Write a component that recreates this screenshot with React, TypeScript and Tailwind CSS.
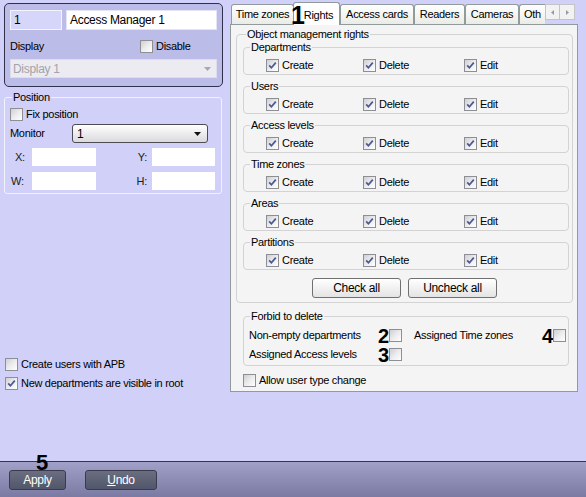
import React from "react";

function Cb({ checked }: { checked?: boolean }) {
  return (
    <span className="w-[13px] h-[13px] shrink-0 border border-[#8e8f94] bg-gradient-to-br from-[#cfcfd4] via-[#ececee] to-white flex items-center justify-center">
      {checked && (
        <svg width="9" height="9" viewBox="0 0 9 9">
          <path d="M1.2 4.4 L3.4 6.8 L7.8 1.6" stroke="#4a5894" strokeWidth="1.7" fill="none" />
        </svg>
      )}
    </span>
  );
}

function Row3() {
  return (
    <div className="flex items-center h-[13px] mt-[5px]">
      <div className="w-[22px]" />
      <div className="w-[97px] flex items-center gap-[3px]">
        <Cb checked />
        <span>Create</span>
      </div>
      <div className="w-[101px] flex items-center gap-[3px]">
        <Cb checked />
        <span>Delete</span>
      </div>
      <div className="flex items-center gap-[3px]">
        <Cb checked />
        <span>Edit</span>
      </div>
    </div>
  );
}

function Group({ title, first }: { title: string; first?: boolean }) {
  return (
    <fieldset
      className={
        "w-[326px] ml-[6px] border border-[#d3d3d3] rounded-[4px] pb-[2px] " + (first ? "" : "mt-[5px]")
      }
    >
      <legend className="ml-[6px] px-[1px] leading-[13px]">{title}</legend>
      <Row3 />
    </fieldset>
  );
}

function Tab({ label, w }: { label: string; w: string }) {
  return (
    <div
      className={
        w +
        " h-[20px] border border-b-0 border-[#919b9c] rounded-t-[3px] bg-gradient-to-b from-white to-[#ebebe6] flex items-center justify-center"
      }
    >
      {label}
    </div>
  );
}

export default function App() {
  return (
    <div className="w-[586px] h-[497px] bg-[#d0d0f8] flex flex-col text-[11px] tracking-[-0.3px] text-black font-['Liberation_Sans',Arial,sans-serif] overflow-hidden">
      <div className="flex flex-1 min-h-0">
        {/* Left column */}
        <div className="w-[230px] flex flex-col pl-[4px] pt-[3px]">
          <div className="w-[219px] h-[84px] border border-[#30304a] rounded-[5px] bg-[#bcbce8] px-[5px] pt-[6px]">
            <div className="flex gap-[4px]">
              <div className="w-[52px] h-[20px] bg-[#d6d6fb] border border-[#f4f4ff] flex items-center pl-[3px] text-[12px]">
                1
              </div>
              <div className="w-[151px] h-[20px] bg-white border border-[#e4e4f4] flex items-center pl-[3px] text-[12px]">
                Access Manager 1
              </div>
            </div>
            <div className="flex items-center h-[20px] mt-[6px]">
              <span className="w-[130px]">Display</span>
              <Cb />
              <span className="ml-[3px]">Disable</span>
            </div>
            <div className="mt-[3px] w-[207px] h-[19px] bg-[#ebebf1] border border-[#dcdcea] flex items-center pl-[2px] text-[#a3a3a8] text-[12px]">
              <span className="flex-1">Display 1</span>
              <svg width="7" height="4" viewBox="0 0 7 4" className="mr-[5px]">
                <path d="M0 0 H7 L3.5 4 Z" fill="#a8a8b0" />
              </svg>
            </div>
          </div>

          <fieldset className="mt-[4px] w-[218px] border border-[#f2f2ff] rounded-[3px] pb-[3px]">
            <legend className="ml-[7px] px-[1px] leading-[12px]">Position</legend>
            <div className="flex items-center h-[13px] mt-[5px] pl-[5px] gap-[3px]">
              <Cb />
              <span>Fix position</span>
            </div>
            <div className="flex items-center h-[19px] mt-[3px] pl-[5px]">
              <span className="w-[62px]">Monitor</span>
              <div className="w-[136px] h-[19px] rounded-[3px] border border-[#4c4c54] bg-gradient-to-b from-white to-[#dadade] flex items-center pl-[4px] text-[12px]">
                <span className="flex-1">1</span>
                <svg width="7" height="4" viewBox="0 0 7 4" className="mr-[6px]">
                  <path d="M0 0 H7 L3.5 4 Z" fill="#111" />
                </svg>
              </div>
            </div>
            <div className="flex items-center h-[18px] mt-[5px] pl-[5px]">
              <span className="w-[22px] pl-[5px] text-[#202020]">X:</span>
              <div className="w-[64px] h-[18px] bg-white" />
              <span className="w-[56px] text-right pr-[5px] text-[#202020]">Y:</span>
              <div className="w-[63px] h-[18px] bg-white" />
            </div>
            <div className="flex items-center h-[18px] mt-[6px] pl-[5px]">
              <span className="w-[22px] pl-[1px] text-[#202020]">W:</span>
              <div className="w-[64px] h-[18px] bg-white" />
              <span className="w-[56px] text-right pr-[5px] text-[#202020]">H:</span>
              <div className="w-[63px] h-[18px] bg-white" />
            </div>
          </fieldset>

          <div className="flex items-center h-[13px] mt-[164px] ml-[1px] gap-[3px]">
            <Cb />
            <span>Create users with APB</span>
          </div>
          <div className="flex items-center h-[13px] mt-[6px] ml-[1px] gap-[3px]">
            <Cb checked />
            <span>New departments are visible in root</span>
          </div>
        </div>

        {/* Right: tab control */}
        <div className="w-[348px] flex flex-col pt-[2px]">
          <div className="relative h-[22px] flex items-end">
            <div className="w-[1px]" />
            <Tab label="Time zones" w="w-[63px]" />
            <div className="relative z-10 w-[47px] h-[23px] -mb-[1px] border border-b-0 border-[#919b9c] rounded-t-[3px] bg-white flex items-start justify-center pt-[4px] pl-[4px] -ml-[1px]">
              Rights
            </div>
            <Tab label="Access cards" w="w-[74px]" />
            <Tab label="Readers" w="w-[51px]" />
            <Tab label="Cameras" w="w-[54px]" />
            <div className="w-[26px] h-[20px] border-l border-t border-[#919b9c] rounded-tl-[3px] bg-gradient-to-b from-white to-[#ebebe6] flex items-center pl-[4px] overflow-hidden">
              Oth
            </div>
            <div className="self-start mt-[2px] flex">
              <div className="w-[15px] h-[16px] border border-[#c4c4c8] bg-[#f2f2f2] flex items-center justify-center">
                <svg width="3" height="5" viewBox="0 0 3 5">
                  <path d="M3 0 V5 L0 2.5 Z" fill="#9a9aa6" />
                </svg>
              </div>
              <div className="w-[15px] h-[16px] border border-l-0 border-[#c4c4c8] bg-[#f2f2f2] flex items-center justify-center">
                <svg width="3" height="5" viewBox="0 0 3 5">
                  <path d="M0 0 V5 L3 2.5 Z" fill="#9a9aa6" />
                </svg>
              </div>
            </div>
            <span className="absolute z-20 left-[61px] top-[1px] text-[25px] font-bold leading-none tracking-normal">1</span>
          </div>

          <div className="h-[368px] border border-[#919b9c] bg-[#f4f4f4] flex flex-col">
            <fieldset className="mt-[3px] ml-[5px] w-[337px] border border-[#d3d3d3] rounded-[4px] pb-[4px]">
              <legend className="ml-[9px] px-[1px] leading-[13px]">Object management rights</legend>
              <Group title="Departments" first />
              <Group title="Users" />
              <Group title="Access levels" />
              <Group title="Time zones" />
              <Group title="Areas" />
              <Group title="Partitions" />
              <div className="flex justify-center gap-[7px] mt-[8px]">
                <div className="w-[89px] h-[20px] rounded-[3px] border border-[#707070] bg-gradient-to-b from-white to-[#e4e4e4] flex items-center justify-center text-[12px]">
                  Check all
                </div>
                <div className="w-[89px] h-[20px] rounded-[3px] border border-[#707070] bg-gradient-to-b from-white to-[#e4e4e4] flex items-center justify-center text-[12px]">
                  Uncheck all
                </div>
              </div>
            </fieldset>

            <fieldset className="mt-[7px] ml-[12px] w-[326px] border border-[#d3d3d3] rounded-[4px] pb-[4px]">
              <legend className="ml-[6px] px-[1px] leading-[13px]">Forbid to delete</legend>
              <div className="flex items-center h-[13px] mt-[6px] pl-[5px]">
                <span className="w-[126px]">Non-empty departments</span>
                <span className="w-[14px] text-right text-[20px] font-bold leading-none tracking-normal">2</span>
                <Cb />
                <span className="w-[12px]" />
                <span className="w-[126px]">Assigned Time zones</span>
                <span className="w-[13px] text-right text-[20px] font-bold leading-none tracking-normal">4</span>
                <Cb />
              </div>
              <div className="flex items-center h-[13px] mt-[6px] pl-[5px]">
                <span className="w-[126px]">Assigned Access levels</span>
                <span className="w-[14px] text-right text-[20px] font-bold leading-none tracking-normal">3</span>
                <Cb />
              </div>
            </fieldset>

            <div className="flex items-center h-[13px] mt-[8px] ml-[12px] gap-[3px]">
              <Cb />
              <span>Allow user type change</span>
            </div>
          </div>
        </div>
      </div>

      {/* Bottom bar */}
      <div className="relative h-[36px] shrink-0 border-t border-[#34344c] bg-gradient-to-b from-[#a0a0c8] to-[#7a7aa2] flex items-start pt-[8px] pl-[9px] gap-[19px]">
        <div className="w-[57px] h-[20px] rounded-[3px] border border-[#3a3a4c] bg-gradient-to-b from-[#6a6e80] to-[#52566a] flex items-center justify-center text-white text-[12px]">
          Apply
        </div>
        <div className="w-[72px] h-[20px] rounded-[3px] border border-[#3a3a4c] bg-gradient-to-b from-[#6a6e80] to-[#52566a] flex items-center justify-center text-white text-[12px]">
          <span className="underline">U</span>ndo
        </div>
        <span className="absolute left-[36px] -top-[10px] text-[22px] font-bold leading-none tracking-normal">5</span>
      </div>
    </div>
  );
}
